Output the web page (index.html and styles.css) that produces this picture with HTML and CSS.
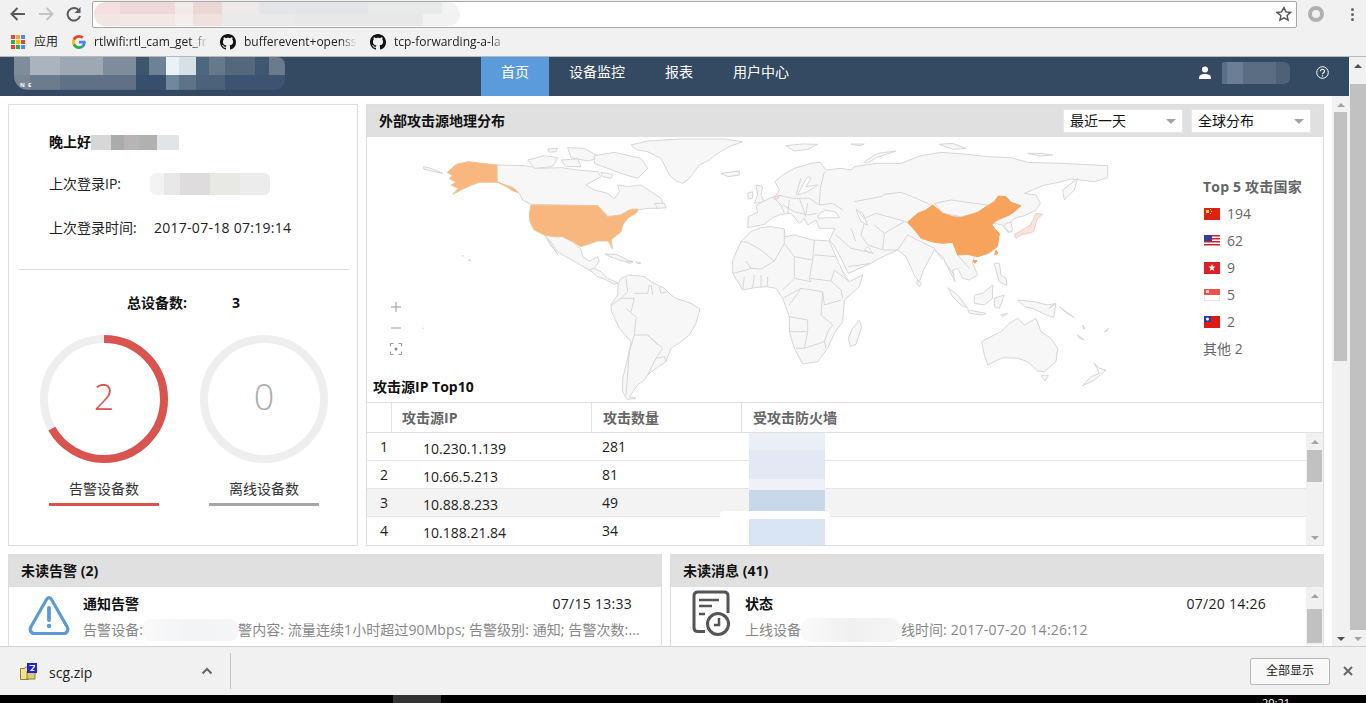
FILE: index.html
```html
<!DOCTYPE html>
<html lang="zh-CN">
<head>
<meta charset="utf-8">
<title>首页</title>
<link rel="stylesheet" href="styles.css">
</head>
<body>
<div class="chrome-top">
  <div class="toolbar">
    <svg class="tb-icon" width="18" height="16" viewBox="0 0 18 16"><path d="M16 8H3M8.500 2 2.500 8l6 6" fill="none" stroke="#5a5a5a" stroke-width="2"/></svg>
    <svg class="tb-icon" width="18" height="16" viewBox="0 0 18 16"><path d="M2 8h13M9.500 2l6 6-6 6" fill="none" stroke="#c4c4c4" stroke-width="2"/></svg>
    <svg class="tb-icon" width="18" height="16" viewBox="0 0 18 16"><path d="M14 4.500A6.300 6.300 0 1 0 15 10" fill="none" stroke="#5a5a5a" stroke-width="2"/><path d="M15.500 1v6h-6z" fill="#5a5a5a"/></svg>
    <div class="address">
      <span class="mask-address"></span>
      <svg width="16" height="16" viewBox="0 0 24 24"><path d="M12 2.500l2.900 6.300 6.900.8-5.100 4.700 1.400 6.800-6.100-3.400-6.100 3.400 1.400-6.800L1.200 9.600l6.900-.8z" fill="none" stroke="#555" stroke-width="2.200"/></svg>
    </div>
    <span class="ext-ring"></span>
    <span class="dots"><i></i><i></i><i></i></span>
  </div>
  <div class="bookmarks">
    <span class="apps"><i class="c1"></i><i class="c2"></i><i class="c3"></i><i class="c4"></i><i class="c5"></i><i class="c6"></i><i class="c7"></i><i class="c8"></i><i class="c3"></i></span>
    <span class="bm-apps">应用</span>
    <span class="bm">
      <svg width="14" height="14" viewBox="0 0 48 48"><path fill="#EA4335" d="M24 9.500c3.500 0 6.700 1.300 9.100 3.500l6.800-6.800C35.800 2.400 30.300 0 24 0 14.600 0 6.500 5.400 2.600 13.200l7.900 6.100C12.400 13.700 17.700 9.500 24 9.500z"/><path fill="#4285F4" d="M47 24.500c0-1.600-.1-3.100-.4-4.500H24v9h12.900c-.6 3-2.300 5.500-4.800 7.200l7.700 6c4.500-4.200 7.200-10.400 7.200-17.700z"/><path fill="#FBBC05" d="M10.500 28.700C10 27.200 9.800 25.600 9.800 24s.3-3.200.7-4.700l-7.900-6.100C.9 16.400 0 20.100 0 24s.9 7.600 2.600 10.800z"/><path fill="#34A853" d="M24 48c6.500 0 11.900-2.100 15.900-5.800l-7.700-6c-2.200 1.400-4.900 2.300-8.200 2.300-6.300 0-11.600-4.200-13.500-9.800l-7.900 6.100C6.500 42.600 14.600 48 24 48z"/></svg>
      <span class="bm-label w1">rtlwifi:rtl_cam_get_fr</span>
    </span>
    <span class="bm">
      <svg width="16" height="16" viewBox="0 0 16 16"><path fill="#111" d="M8 0C3.580 0 0 3.580 0 8c0 3.540 2.290 6.530 5.470 7.590.4.070.55-.17.55-.38 0-.19-.01-.82-.01-1.490-2.010.37-2.530-.49-2.690-.94-.09-.23-.48-.94-.82-1.130-.28-.15-.68-.52-.01-.53.63-.01 1.080.58 1.230.82.72 1.210 1.870.87 2.330.66.07-.52.28-.87.51-1.070-1.780-.2-3.640-.89-3.640-3.950 0-.87.31-1.590.82-2.150-.08-.2-.36-1.020.08-2.120 0 0 .67-.21 2.200.82.64-.18 1.320-.27 2-.27s1.360.09 2 .27c1.530-1.040 2.200-.82 2.200-.82.44 1.100.16 1.920.08 2.120.51.56.82 1.270.82 2.150 0 3.070-1.870 3.750-3.650 3.950.29.25.54.73.54 1.480 0 1.070-.01 1.930-.01 2.200 0 .21.15.46.55.38A8.013 8.013 0 0 0 16 8c0-4.420-3.580-8-8-8z"/></svg>
      <span class="bm-label w2">bufferevent+openssl</span>
    </span>
    <span class="bm">
      <svg width="16" height="16" viewBox="0 0 16 16"><path fill="#111" d="M8 0C3.580 0 0 3.580 0 8c0 3.540 2.290 6.530 5.470 7.590.4.070.55-.17.55-.38 0-.19-.01-.82-.01-1.490-2.010.37-2.530-.49-2.690-.94-.09-.23-.48-.94-.82-1.130-.28-.15-.68-.52-.01-.53.63-.01 1.080.58 1.230.82.72 1.210 1.870.87 2.330.66.07-.52.28-.87.51-1.070-1.780-.2-3.640-.89-3.640-3.950 0-.87.31-1.590.82-2.150-.08-.2-.36-1.020.08-2.120 0 0 .67-.21 2.200.82.64-.18 1.320-.27 2-.27s1.360.09 2 .27c1.530-1.040 2.200-.82 2.200-.82.44 1.100.16 1.920.08 2.120.51.56.82 1.270.82 2.150 0 3.070-1.870 3.750-3.650 3.950.29.25.54.73.54 1.480 0 1.070-.01 1.930-.01 2.200 0 .21.15.46.55.38A8.013 8.013 0 0 0 16 8c0-4.420-3.580-8-8-8z"/></svg>
      <span class="bm-label w3">tcp-forwarding-a-la</span>
    </span>
  </div>
</div>

<div class="page">
  <div class="viewport">
    <nav class="nav">
      <div class="logo"><span class="mask-logo"></span><span class="logo-ne">N&nbsp;&nbsp;E</span></div>
      <a class="nav-item active">首页</a>
      <a class="nav-item">设备监控</a>
      <a class="nav-item">报表</a>
      <a class="nav-item">用户中心</a>
      <div class="nav-right">
        <svg width="12" height="13" viewBox="0 0 12 13"><circle cx="6" cy="3.500" r="3" fill="#fff"/><path d="M0 13v-1.500C0 9 3 8 6 8s6 1 6 3.500V13z" fill="#fff"/></svg>
        <span class="mask-user"></span>
        <svg class="help" width="13" height="13" viewBox="0 0 13 13"><circle cx="6.500" cy="6.500" r="5.800" fill="none" stroke="#fff" stroke-width="1"/><path d="M4.500 5.200c0-2.600 4-2.600 4 0 0 1.500-2 1.500-2 3" fill="none" stroke="#fff" stroke-width="1.100"/><circle cx="6.500" cy="10" r=".7" fill="#fff"/></svg>
      </div>
    </nav>
    <div class="below">
      <main class="content">
        <div class="top-row">
          <section class="card summary">
            <div class="info">
              <div class="greet">晚上好<span class="mask-greet"></span></div>
              <div class="info-row">上次登录IP:<span class="mask-ip"></span></div>
              <div class="info-row"><span class="info-label">上次登录时间:</span><span class="stamp">2017-07-18 07:19:14</span></div>
            </div>
            <div class="total"><span class="total-label">总设备数:</span><span>3</span></div>
            <div class="rings">
              <div class="ring-item">
                <svg class="ring" width="128" height="128" viewBox="0 0 128 128">
                  <circle cx="64" cy="64" r="60" fill="none" stroke="#eeeeee" stroke-width="8"/>
                  <circle cx="64" cy="64" r="60" fill="none" stroke="#d9534f" stroke-width="8" stroke-dasharray="251.300 377" transform="rotate(-90 64 64)"/>
                  <text class="ring-num red" x="64" y="75" text-anchor="middle">2</text>
                </svg>
                <div class="ring-label red-line">告警设备数</div>
              </div>
              <div class="ring-item">
                <svg class="ring" width="128" height="128" viewBox="0 0 128 128">
                  <circle cx="64" cy="64" r="60" fill="none" stroke="#eeeeee" stroke-width="8"/>
                  <text class="ring-num grey" x="64" y="75" text-anchor="middle">0</text>
                </svg>
                <div class="ring-label grey-line">离线设备数</div>
              </div>
            </div>
          </section>

          <section class="card attack">
            <header class="head head-map">
              <h2>外部攻击源地理分布</h2>
              <div class="selects">
                <div class="select">最近一天<i></i></div>
                <div class="select">全球分布<i></i></div>
              </div>
            </header>
            <div class="map-area">
              <svg class="map" width="820" height="265" viewBox="366 137 820 265">
                <g class="land" transform="translate(380 135) scale(.33333)">
                  <path d="M750,30 800,18 900,12 1030,12 1085,20 1045,35 1010,55 985,75 955,90 925,130 905,145 885,138 865,120 850,90 840,70 800,50 770,45Z"/>
                  <path d="M1020,115 1075,108 1075,120 1040,125Z"/>
                  <path d="M348,90 430,92 480,100 540,98 590,105 650,110 660,125 615,150 640,165 680,175 700,192 715,170 710,150 740,155 780,150 810,170 840,190 850,215 830,220 800,220 770,225 755,222 720,240 685,245 650,212 450,208 425,195 415,175 395,158 372,150 348,140Z"/>
                  <path d="M820,205 850,205 855,218 830,220Z"/>
                  <path d="M440,75 490,62 530,68 515,95 460,100Z"/>
                  <path d="M560,38 610,40 660,68 620,78 570,68Z"/>
                  <path d="M640,62 700,52 780,70 800,100 770,130 720,115 680,100 640,85Z"/>
                  <path d="M500,42 530,40 525,50 505,52Z"/>
                  <path d="M660,112 695,118 690,130 665,125Z"/>
                  <path d="M540,75 590,72 600,95 555,95Z"/>
                  <path d="M128,95 150,100 185,115 160,110 128,102Z"/>
                  <path d="M490,300 520,305 545,305 575,320 600,342 605,365 625,378 650,365 655,378 640,400 625,405 590,385 555,365 530,350 510,320Z"/>
                  <path d="M495,305 525,350 530,358 505,325Z"/>
                  <path d="M640,400 660,410 680,430 712,445 698,447 670,432 650,425 630,408 625,405Z"/>
                  <path d="M672,357 705,358 740,375 755,380 725,378 695,368Z"/>
                  <path d="M735,380 755,382 745,386Z M765,380 780,384 768,386Z"/>
                  <path d="M712,445 720,430 745,420 790,425 810,440 850,460 870,480 885,490 930,505 957,522 945,565 925,600 900,620 870,640 855,680 825,700 800,720 790,735 770,750 745,785 765,790 738,793 725,770 725,730 740,670 750,620 715,580 692,530 690,510 710,480Z"/>
                  <path class="line" d="M692,510 720,490 740,470 735,430 M760,475 800,475 805,450 M810,450 815,480 M835,455 840,475 860,470 M735,520 770,550 M720,490 760,490 750,530 M765,550 760,600 800,600 830,630 M760,600 745,650 735,780 M825,670 850,665 855,680 M800,600 845,640 825,670 800,720"/>
                  <path class="usa" d="M200,112 225,88 262,80 348,90 348,140 372,150 395,158 412,172 400,170 378,156 350,142 320,142 295,142 272,150 240,165 215,178 232,160 210,150 225,142 205,130 215,122 198,112Z"/>
                  <path class="usa" d="M450,210 650,212 680,245 720,240 745,225 770,222 768,232 740,250 725,270 720,290 690,315 695,342 682,318 650,318 600,335 575,320 545,305 520,305 490,300 460,285 447,262 445,235Z"/>
                  <path class="dots-pac" d="M243,360 251,364 243,364Z M262,372 270,376 264,379Z M125,578h3v3h-3Z"/>
                </g>
                <g class="land" transform="translate(760 135) scale(.33333)">
                  <path d="M75,32 125,27 170,28 140,43 100,48Z M270,27 310,27 295,32Z M535,28 575,25 615,40 575,43Z"/>
                  <path d="M310,80 350,55 405,48 345,68 320,85Z M800,55 840,55 875,60 835,63Z"/>
                  <path d="M-15,150 5,155 0,180 10,200 -20,205 -10,180Z M-40,175 -25,170 -25,190 -38,192Z"/>
                  <path d="M-40,278 -38,245 -10,232 -15,212 5,200 30,188 45,182 55,165 42,140 65,120 100,100 150,85 178,82 195,105 240,100 270,105 280,95 350,85 420,85 480,62 540,52 620,58 680,65 750,68 800,82 900,85 1040,92 1040,128 1000,140 960,135 930,132 880,145 850,150 790,175 825,180 838,205 825,225 790,242 760,250 745,265 752,290 740,292 725,270 700,265 690,270 715,300 710,335 685,355 640,365 635,385 650,420 625,435 605,430 590,400 575,405 582,440 560,395 545,365 520,345 490,400 475,440 462,425 435,365 410,345 355,370 330,385 262,415 240,370 218,330 205,315 222,280 175,280 165,255 140,270 130,250 115,265 90,235 60,238 35,248 10,268Z"/>
                  <path class="sea" d="M175,235 195,225 225,232 235,248 200,248 170,250Z M285,225 305,235 320,270 300,260Z M110,180 125,150 140,125 150,130 135,155 170,150 140,170Z M310,345 335,355 320,335Z"/>
                  <path d="M905,165 950,130 940,165 910,195Z"/>
                  <path d="M-85,375 -60,320 -30,290 0,278 30,275 70,282 72,305 100,300 155,315 205,318 225,365 250,420 265,440 305,420 295,455 250,495 245,560 220,595 200,640 170,680 125,687 100,640 85,590 85,545 65,490 45,460 15,455 -20,458 -55,465 -85,415Z"/>
                  <path d="M295,555 302,575 285,628 268,635 262,610 272,585Z"/>
                  <path d="M470,435 482,445 475,455 467,445Z"/>
                  <path d="M560,458 590,480 620,520 600,510 575,485Z M620,525 675,535 665,540 625,535Z M720,540 740,535 725,545Z"/>
                  <path d="M640,480 665,475 695,450 695,490 670,510 640,505Z M700,490 730,480 715,520 700,515Z M700,385 715,385 720,420 735,430 738,452 715,440 705,405Z"/>
                  <path d="M770,495 820,500 860,510 885,505 878,548 845,535 815,520 790,515Z M895,515 915,530 940,548 915,533Z M885,505 865,520 870,515Z"/>
                  <path d="M662,620 690,605 720,590 745,565 770,550 790,570 825,550 840,590 870,610 890,640 885,680 850,710 830,708 800,680 770,670 725,668 680,690 670,660Z"/>
                  <path d="M840,722 862,722 852,738Z M1000,685 1015,700 1035,705 1000,735 965,752 990,725 1015,715Z M950,600 970,615 955,610Z M1030,590 1042,580 1037,590Z M965,570 972,582 968,582Z"/>
                  <path class="line" d="M70,282 70,325 40,378 0,345 -40,322 -60,320 M40,378 0,402 -30,400 -45,378 M-85,415 -45,405 -30,400 M70,325 100,365 155,375 160,315 M155,375 145,430 150,440 100,430 100,365 M100,430 65,465 M145,430 210,438 220,405 265,440 M210,438 240,465 245,490 M160,360 225,365 M65,490 120,460 185,470 190,510 240,495 M120,460 85,510 M185,470 180,540 215,570 M85,545 140,555 140,590 85,590 M140,590 130,640 190,620 200,590 215,570 M130,640 105,640 M190,620 195,640 M-55,465 -50,425 M-25,458 -20,420 M0,456 0,420 M20,455 20,425"/>
                  <path class="line" d="M280,200 360,185 370,178 420,172 455,185 510,210 M285,222 310,250 345,235 400,250 440,262 M310,265 300,300 320,330 365,345 370,295 340,270 M370,295 430,260 M365,345 410,345 440,300 M440,300 520,340 M520,340 545,375 M550,380 580,420 M590,360 625,400 M225,300 270,340 340,355 M270,280 285,320 M262,395 330,385 M50,180 95,190 145,190 175,210 215,205 245,225 M120,130 105,180 M65,210 100,230 140,240 170,235 M85,195 80,235 M115,190 135,245 M140,205 135,235 M40,190 60,210 70,235 M190,110 178,160 175,210"/>
                  <path d="M520,205 570,195 640,205 680,210 650,235 600,245 545,235Z"/>
                  <path d="M735,265 750,262 755,285 745,292 730,275Z"/>
                  <path class="china" d="M440,262 470,235 495,225 515,210 545,235 575,245 600,248 650,232 680,212 700,200 712,183 735,185 750,202 780,212 760,230 745,240 710,255 692,268 700,280 715,295 708,335 680,355 650,365 620,358 590,360 575,322 545,325 520,322 480,310 465,290Z"/>
                  <path class="china" d="M705,345 711,355 701,360Z M635,378 648,376 642,385Z"/>
                  <path class="pink" d="M760,298 775,290 808,270 825,235 845,238 828,252 818,290 780,300 765,310Z"/>
                  <path class="pink" d="M40,185 55,182 50,192 38,192Z"/>
                </g>
                <g class="map-tools">
                  <path d="M390 307h10M395 302v10M390 328h10"/>
                  <path d="M389.500 346.500v-3h3M397.500 343.500h3v3M400.500 351.500v3h-3M392.500 354.500h-3v-3"/>
                  <circle cx="395" cy="349" r="1.500" fill="#888" stroke="none"/>
                </g>
              </svg>
              <div class="legend">
                <h3>Top 5 攻击国家</h3>
                <div class="legend-row">
                  <svg class="flag" width="16" height="12" viewBox="0 0 16 12"><rect width="16" height="12" fill="#de2110"/><rect x="2" y="2" width="3" height="3" fill="#ffd83a"/><path d="M6 1h1v1H6zM7 3h1v1H7zM6 5h1v1H6z" fill="#ffd83a"/></svg>
                  <span>194</span>
                </div>
                <div class="legend-row">
                  <svg class="flag" width="16" height="12" viewBox="0 0 16 12"><rect width="16" height="12" fill="#fff"/><path d="M0 0h16v1.500H0zM0 3h16v1.500H0zM0 6h16v1.500H0zM0 9h16v1.500H0z" fill="#c8202c"/><rect width="8" height="6" fill="#3c3b8e"/></svg>
                  <span>62</span>
                </div>
                <div class="legend-row">
                  <svg class="flag" width="16" height="12" viewBox="0 0 16 12"><rect width="16" height="12" fill="#de1f28"/><path d="M8 2l1 2.500 2.500 0-2 1.800.8 2.700L8 7.500 5.700 9l.8-2.700-2-1.800L7 4.500z" fill="#fff"/></svg>
                  <span>9</span>
                </div>
                <div class="legend-row">
                  <svg class="flag" width="16" height="12" viewBox="0 0 16 12"><rect width="16" height="12" fill="#fff" stroke="#ccc"/><rect width="16" height="6" fill="#e8554f"/><path d="M2 1h3v3H2z" fill="#f8c8c4"/></svg>
                  <span>5</span>
                </div>
                <div class="legend-row">
                  <svg class="flag" width="16" height="12" viewBox="0 0 16 12"><rect width="16" height="12" fill="#de1a14"/><rect width="7" height="6" fill="#2a3a9c"/><circle cx="3.500" cy="3" r="1.500" fill="#fff"/></svg>
                  <span>2</span>
                </div>
                <div class="legend-row">其他 2</div>
              </div>
              <h3 class="top10">攻击源IP Top10</h3>
            </div>
            <div class="table">
              <div class="t-row t-head">
                <span class="c-idx"></span><span class="c-ip">攻击源IP</span><span class="c-count">攻击数量</span><span class="c-fw">受攻击防火墙</span>
              </div>
              <div class="t-body">
                <div class="t-rows">
                  <div class="t-row"><span class="c-idx">1</span><span class="c-ip val">10.230.1.139</span><span class="c-count">281</span><span class="c-fw"></span></div>
                  <div class="t-row"><span class="c-idx">2</span><span class="c-ip val">10.66.5.213</span><span class="c-count">81</span><span class="c-fw"></span></div>
                  <div class="t-row alt"><span class="c-idx">3</span><span class="c-ip val">10.88.8.233</span><span class="c-count">49</span><span class="c-fw"></span></div>
                  <div class="t-row"><span class="c-idx">4</span><span class="c-ip val">10.188.21.84</span><span class="c-count">34</span><span class="c-fw"></span></div>
                  <span class="mask-fw"></span>
                  <span class="mask-fw-strip"></span>
                </div>
                <div class="sb sb-table"><i class="up"></i><div class="track"><b></b></div><i class="down"></i></div>
              </div>
            </div>
          </section>
        </div>

        <div class="bottom-row">
          <section class="card panel">
            <header class="head"><h2>未读告警 (2)</h2></header>
            <div class="panel-body">
              <svg class="panel-icon" width="42" height="40" viewBox="0 0 42 40"><path d="M18.500 3.500 2.800 31c-1.600 3 .2 6.500 3.700 6.500h29c3.500 0 5.300-3.500 3.700-6.500L23.500 3.500c-1.400-2.400-3.600-2.400-5 0z" fill="none" stroke="#5b9bd5" stroke-width="3.200" stroke-linejoin="round"/><path d="M21 12v12" stroke="#5b9bd5" stroke-width="3.800" stroke-linecap="round"/><circle cx="21" cy="30" r="2.200" fill="#5b9bd5"/></svg>
              <div class="msg">
                <div class="msg-top"><strong>通知告警</strong><time class="stamp">07/15 13:33</time></div>
                <div class="msg-desc desc-alert">告警设备:<span class="mask-a"></span>警内容: 流量连续1小时超过90Mbps; 告警级别: 通知; 告警次数:...</div>
              </div>
            </div>
          </section>
          <section class="card panel">
            <header class="head"><h2>未读消息 (41)</h2></header>
            <div class="panel-body">
              <svg class="panel-icon icon-msg" width="42" height="46" viewBox="0 0 42 46"><path d="M14 41.500H7c-2.500 0-4-1.500-4-4V6c0-2.500 1.500-4 4-4h26c2.500 0 4 1.500 4 4v17" fill="none" stroke="#555" stroke-width="3"/><path d="M8 10h20M8 16h13M8 24h6" stroke="#555" stroke-width="2.500"/><circle cx="27" cy="34" r="10.500" fill="#fff" stroke="#555" stroke-width="3"/><path d="M28 28v7h-5" fill="none" stroke="#555" stroke-width="2.500"/></svg>
              <div class="msg msg-2">
                <div class="msg-top"><strong>状态</strong><time class="stamp">07/20 14:26</time></div>
                <div class="msg-desc">上线设备<span class="mask-m"></span>线时间:<span class="stamp stamp-gap">2017-07-20 14:26:12</span></div>
              </div>
              <div class="sb sb-panel"><i class="up"></i><div class="track"><b></b></div></div>
            </div>
          </section>
        </div>
      </main>
      <div class="sb sb-inner"><i class="up"></i><div class="track"><b></b></div><i class="down dark"></i></div>
    </div>
  </div>
  <div class="sb sb-outer"><i class="up"></i><div class="track"><b></b></div><i class="down"></i></div>
</div>

<div class="download-bar">
  <svg class="zip" width="17" height="17" viewBox="0 0 17 17"><path d="M0.500 5.500h4l1-1.500h3v12.500H.5z" fill="#f3e28a" stroke="#8a8238"/><rect x="7" y="9" width="8" height="7" fill="#d8cd72" stroke="#8a8238"/><rect x="7" y="0" width="10" height="10" fill="#2020e0"/><path d="M9.500 2.500h5v1l-3.500 4h3.500" fill="none" stroke="#fff" stroke-width="1.200"/></svg>
  <span class="file-name">scg.zip</span>
  <svg class="caret" width="12" height="8" viewBox="0 0 12 8"><path d="M1.500 6.500 6 2l4.500 4.500" fill="none" stroke="#666" stroke-width="2"/></svg>
  <span class="bar-divider"></span>
  <button class="show-all">全部显示</button>
  <svg class="close" width="10" height="10" viewBox="0 0 10 10"><path d="M1 1l8 8M9 1 1 9" stroke="#666" stroke-width="2"/></svg>
</div>
<div class="taskbar"><span class="task-active"></span><span class="clock">20:21</span></div>
</body>
</html>
```

FILE: styles.css
```css
* { box-sizing: border-box; }
html, body { margin: 0; height: 703px; overflow: hidden; }
body { font: 14px/20px "Open Sans", "Noto Sans CJK SC", sans-serif; color: #222; background: #fff; }
h2, h3 { margin: 0; }
.stamp { letter-spacing: .27px; }
.stamp-gap { margin-left: 4px; }

/* browser chrome */
.chrome-top { height: 57px; background: #f1f1f1; border-bottom: 1px solid #b8b8b8; }
.toolbar { height: 28px; display: flex; align-items: center; padding-left: 9px; }
.tb-icon { margin-right: 10px; flex: none; }
.toolbar .tb-icon:nth-child(3) { margin-right: 9px; }
.address { width: 1205px; height: 27px; background: #fff; border: 1px solid #a9a9a9; border-radius: 2px; display: flex; align-items: center; justify-content: space-between; padding: 0 4px 0 1px; }
.mask-address { width: 366px; height: 24px; border-radius: 12px;
  background: linear-gradient(90deg, #f3e0de 0 7%, #efd9d8 7% 22%, #f3ebe9 22% 27%, #ecd6d4 27% 35%, #eeeaea 35% 45%, #e4e5e8 45% 75%, #e8e9e9 75% 95%, #f3f3f3 95%) top / 100% 50% no-repeat,
    linear-gradient(90deg, #f2e6e4 0 7%, #f2e9e7 7% 22%, #f4eeec 22% 27%, #f0e0de 27% 35%, #eaeaea 35% 55%, #e8e8e8 55% 90%, #f2f2f2 90%) bottom / 100% 50% no-repeat; }
.ext-ring { width: 16px; height: 16px; margin-left: 11px; border: 4px solid #b0b0b0; border-radius: 50%; }
.dots { display: flex; flex-direction: column; gap: 2px; margin-left: 27px; }
.dots i { width: 3px; height: 3px; background: #666; border-radius: 50%; }
.bookmarks { height: 28px; display: flex; align-items: center; padding-left: 11px; font-size: 12px; }
.apps { width: 14px; display: grid; grid-template-columns: repeat(3, 4px); gap: 1px; flex: none; }
.apps i { height: 4px; }
.c1 { background: #e8453c; } .c2 { background: #f4a52c; } .c3 { background: #4a8af4; }
.c4 { background: #34a853; } .c5 { background: #fbbc05; } .c6 { background: #ea4335; }
.c7 { background: #ea4335; } .c8 { background: #34a853; }
.bm-apps { margin-left: 9px; width: 38px; flex: none; }
.bm { display: flex; align-items: center; gap: 8px; flex: none; }
.bm svg { flex: none; }
.bm-label { display: block; overflow: hidden; white-space: nowrap; -webkit-mask-image: linear-gradient(90deg, #000 85%, transparent); mask-image: linear-gradient(90deg, #000 85%, transparent); }
.w1 { width: 114px; margin-right: 12px; }
.w2 { width: 113px; margin-right: 13px; }
.w3 { width: 113px; }

/* page shell */
.page { height: 589px; display: flex; overflow: hidden; }
.viewport { width: 1349px; flex: none; display: flex; flex-direction: column; }
.nav { height: 39px; flex: none; background: #344a63; display: flex; color: #fff; }
.logo { width: 481px; flex: none; padding-left: 14px; position: relative; }
.mask-logo { display: block; width: 271px; height: 33px; border-radius: 0 8px 10px 14px;
  background: linear-gradient(90deg, #7f8c9a 0 6%, #aab3be 6% 17%, #9ea8b5 17% 33%, #7e8c9b 33% 45%, #3f556e 45% 50%, #6f8295 50% 56%, #e8f2f8 56% 61%, #d5e0e8 61% 67%, #4d6781 67% 72%, #66788b 72% 78%, #53677d 78% 89%, #3f5770 89% 94%, #6b7a8c 94%) top / 100% 55% no-repeat,
    linear-gradient(90deg, #7a8694 0 6%, #6c7b8d 6% 17%, #5f7087 17% 45%, #36506b 45% 56%, #6f879f 56% 61%, #5e7388 61% 67%, #4b627a 67% 78%, #3d5470 78%) bottom / 100% 45% no-repeat; }
.logo-ne { position: absolute; left: 20px; top: 24px; font-size: 6px; font-weight: 700; line-height: 8px; }
.nav-item { line-height: 30px; padding: 0 20px; flex: none; color: #fff; }
.nav-item.active { background: #5b9bdb; }
.nav-right { margin-left: auto; display: flex; align-items: center; padding: 0 20px 8px 0; }
.mask-user { width: 72px; height: 22px; margin-left: 7px; border-radius: 6px;
  background: linear-gradient(90deg, #41577a00 0 5%, #5a7088 5% 12%, #6a7f96 12% 35%, #5a6d83 35% 80%, #4f6177 80%); }
.help { margin-left: 26px; }
.below { flex: 1; display: flex; min-height: 0; }
.content { width: 1332px; flex: none; padding: 8px 8px 0; overflow: hidden; background: #fff; }

/* scrollbars */
.sb { width: 17px; flex: none; display: flex; flex-direction: column; align-items: center; background: #f1f1f1; }
.sb i { display: block; width: 0; height: 0; flex: none; border-left: 4px solid transparent; border-right: 4px solid transparent; }
.sb .up { border-bottom: 4px solid #a3a3a3; margin: 7px 0 6px; }
.sb .down { border-top: 4px solid #a3a3a3; margin: 6px 0 5px; }
.sb .down.dark { border-top-color: #505050; }
.sb .track { flex: 1; width: 100%; min-height: 0; }
.sb .track b { display: block; background: #c1c1c1; }
.sb-outer .up { border-bottom-color: #505050; }
.sb-outer .track b { height: 546px; margin: 10px 0 0 1px; }
.sb-outer { height: 589px; }
.sb-inner .track b { height: 249px; margin: 0 2px; }
.sb-inner .up { margin: 7px 0 5px; }
.sb-table .track b { height: 32px; margin: 0 1px; }
.sb-panel { margin-left: auto; height: 58px; }
.sb-panel .track b { height: 34px; margin: 5px 1px 0; }

/* cards */
.top-row { display: flex; gap: 8px; height: 442px; }
.card { border: 1px solid #dedede; background: #fff; }
.summary { width: 350px; flex: none; }
.attack { width: 958px; flex: none; display: flex; flex-direction: column; }
.info { margin: 0 8px 0 10px; padding: 27px 30px 0; height: 165px; border-bottom: 1px solid #dedede; display: grid; grid-template-rows: 42px 44px 20px; align-content: start; }
.greet { font-weight: 600; color: #111; display: flex; }
.mask-greet { width: 88px; height: 15px; margin-top: 3px; background: linear-gradient(90deg, #d6d8d6 0 23%, #a9ada9 23% 38%, #b8b4b4 38% 55%, #b0b2b0 55% 75%, #e2e5e8 75%); }
.info-row { display: flex; }
.mask-ip { width: 120px; height: 22px; margin: -1px 0 0 29px; border-radius: 6px; background: linear-gradient(90deg, #f3f3f3 0 12%, #e8e8e8 12% 25%, #dedcdc 25% 50%, #e8e8e4 50% 75%, #ececec 75%); }
.info-label { width: 105px; flex: none; }
.total { display: flex; padding: 23px 0 0 118px; font-weight: 700; color: #111; }
.total-label { width: 105px; }
.rings { display: flex; padding: 22px 0 0 15px; }
.ring-item { width: 160px; display: flex; flex-direction: column; align-items: center; }
.ring { display: block; }
.ring-num { font-size: 36px; font-weight: 300; }
.ring-num.red { fill: #d9534f; }
.ring-num.grey { fill: #aaaaaa; }
.ring-label { width: 110px; margin-top: 16px; padding-bottom: 4px; text-align: center; border-bottom: 3px solid; color: #333; }
.red-line { border-color: #d9534f; }
.grey-line { border-color: #a6a6a6; }

.head { height: 32px; flex: none; background: #e0e0e0; display: flex; align-items: center; padding: 0 12px; }
.head h2 { font-size: 14px; font-weight: 700; color: #111; }
.selects { margin-left: auto; display: flex; gap: 8px; }
.select { width: 120px; height: 24px; background: #fff; border: 1px solid #e6e6e6; padding-left: 6px; line-height: 22px; color: #111; position: relative; }
.select i { position: absolute; right: 6px; top: 9px; border-left: 5px solid transparent; border-right: 5px solid transparent; border-top: 5px solid #a3a3a3; }

.map-area { height: 265px; flex: none; display: flex; position: relative; }
.map { display: block; flex: none; }
.land path { fill: #f7f7f7; stroke: #d6d6d6; stroke-width: 3; stroke-linejoin: round; }
.land path.line { fill: none; }
.land path.sea { fill: #fff; }
.land path.usa { fill: #f8b77f; stroke: #f3c294; }
.land path.china { fill: #f7a35c; stroke: #f7a35c; }
.land path.pink { fill: #fbe2dc; stroke: #e8d0cc; }
.land path.dots-pac { fill: #dbb9a0; stroke: none; }
.map-tools { fill: none; stroke: #999; stroke-width: 1; }
.legend { padding: 40px 0 0 16px; color: #666; }
.legend h3 { font-size: 14px; font-weight: 700; color: #666; margin-bottom: 3px; letter-spacing: .2px; }
.legend-row { display: flex; align-items: center; gap: 7px; height: 27px; }
.flag { flex: none; margin-left: 1px; }
.top10 { position: absolute; left: 6px; top: 240px; font-size: 14px; font-weight: 700; color: #111; }

.table { flex: 1; min-height: 0; border-top: 1px solid #e0e0e0; }
.t-row { display: flex; height: 28px; line-height: 28px; border-bottom: 1px solid #e6e6e6; }
.t-row:last-of-type { border-bottom: 0; }
.t-head { height: 30px; line-height: 29px; font-weight: 700; color: #666; border-bottom: 1px solid #e0e0e0; }
.t-head span + span { border-left: 1px solid #e0e0e0; }
.c-idx { width: 24px; flex: none; padding-left: 13px; }
.c-ip { width: 200px; flex: none; padding-left: 10px; }
.c-ip.val { padding-left: 32px; padding-top: 2px; }
.c-count { width: 150px; flex: none; padding-left: 11px; }
.c-fw { flex: 1; padding-left: 11px; }
.t-body { display: flex; height: 112px; }
.t-rows { flex: 1; position: relative; overflow: hidden; }
.alt { background: #f3f3f3; }
.mask-fw { position: absolute; left: 382px; top: 0; width: 76px; height: 112px; background: linear-gradient(180deg, #e9eef7 0 17px, #e2e9f5 17px 46px, #eef1f7 46px 57px, #c9d7ea 57px 78px, #d9e5f5 78px); }
.mask-fw-strip { position: absolute; left: 353px; top: 78px; width: 110px; height: 8px; background: #fff; border-radius: 4px; }
.sb-table { height: 112px; }

.bottom-row { display: flex; gap: 8px; margin-top: 8px; }
.panel { flex: 1; height: 100px; }
.panel-body { display: flex; height: 58px; overflow: hidden; }
.panel-icon { flex: none; margin: 9px 13px 0 19px; }
.icon-msg { margin: 3px 12px 0 20px; }
.msg { width: 549px; padding-top: 7px; }
.msg-2 { width: 521px; }
.msg-top { display: flex; justify-content: space-between; height: 20px; }
.msg-top strong { font-weight: 700; color: #111; }
.msg-desc { display: flex; margin-top: 6px; color: #888; white-space: pre; }
.desc-alert { letter-spacing: .08px; }
.mask-a { flex: none; width: 95px; height: 22px; margin-top: -1px; border-radius: 8px; background: linear-gradient(90deg, #fafafa, #f2f3f5 50%, #f5f6f7); }
.mask-m { flex: none; width: 100px; height: 24px; margin-top: -2px; border-radius: 10px; background: linear-gradient(90deg, #fafafa, #f0f0f0 50%, #f5f5f5); }

/* download bar */
.download-bar { height: 49px; background: #f1f1f1; border-top: 1px solid #d0d0d0; display: flex; align-items: center; padding-left: 20px; }
.zip { flex: none; }
.file-name { margin-left: 12px; width: 152px; padding-top: 3px; }
.caret { flex: none; }
.bar-divider { width: 1px; height: 36px; background: #c4c4c4; margin-left: 17px; }
.show-all { margin-left: 1019px; width: 80px; height: 27px; background: #f8f8f8; border: 1px solid #b8b8b8; border-radius: 2px; font: 12px/1 "Open Sans", "Noto Sans CJK SC", sans-serif; color: #222; padding: 0; }
.close { margin-left: 13px; flex: none; }
.taskbar { height: 8px; background: #000; position: relative; overflow: hidden; }
.task-active { position: absolute; left: 393px; top: 0; width: 48px; height: 8px; background: #333; }
.clock { position: absolute; left: 1262px; top: 2px; font-size: 11px; line-height: 12px; color: #fff; }
```
